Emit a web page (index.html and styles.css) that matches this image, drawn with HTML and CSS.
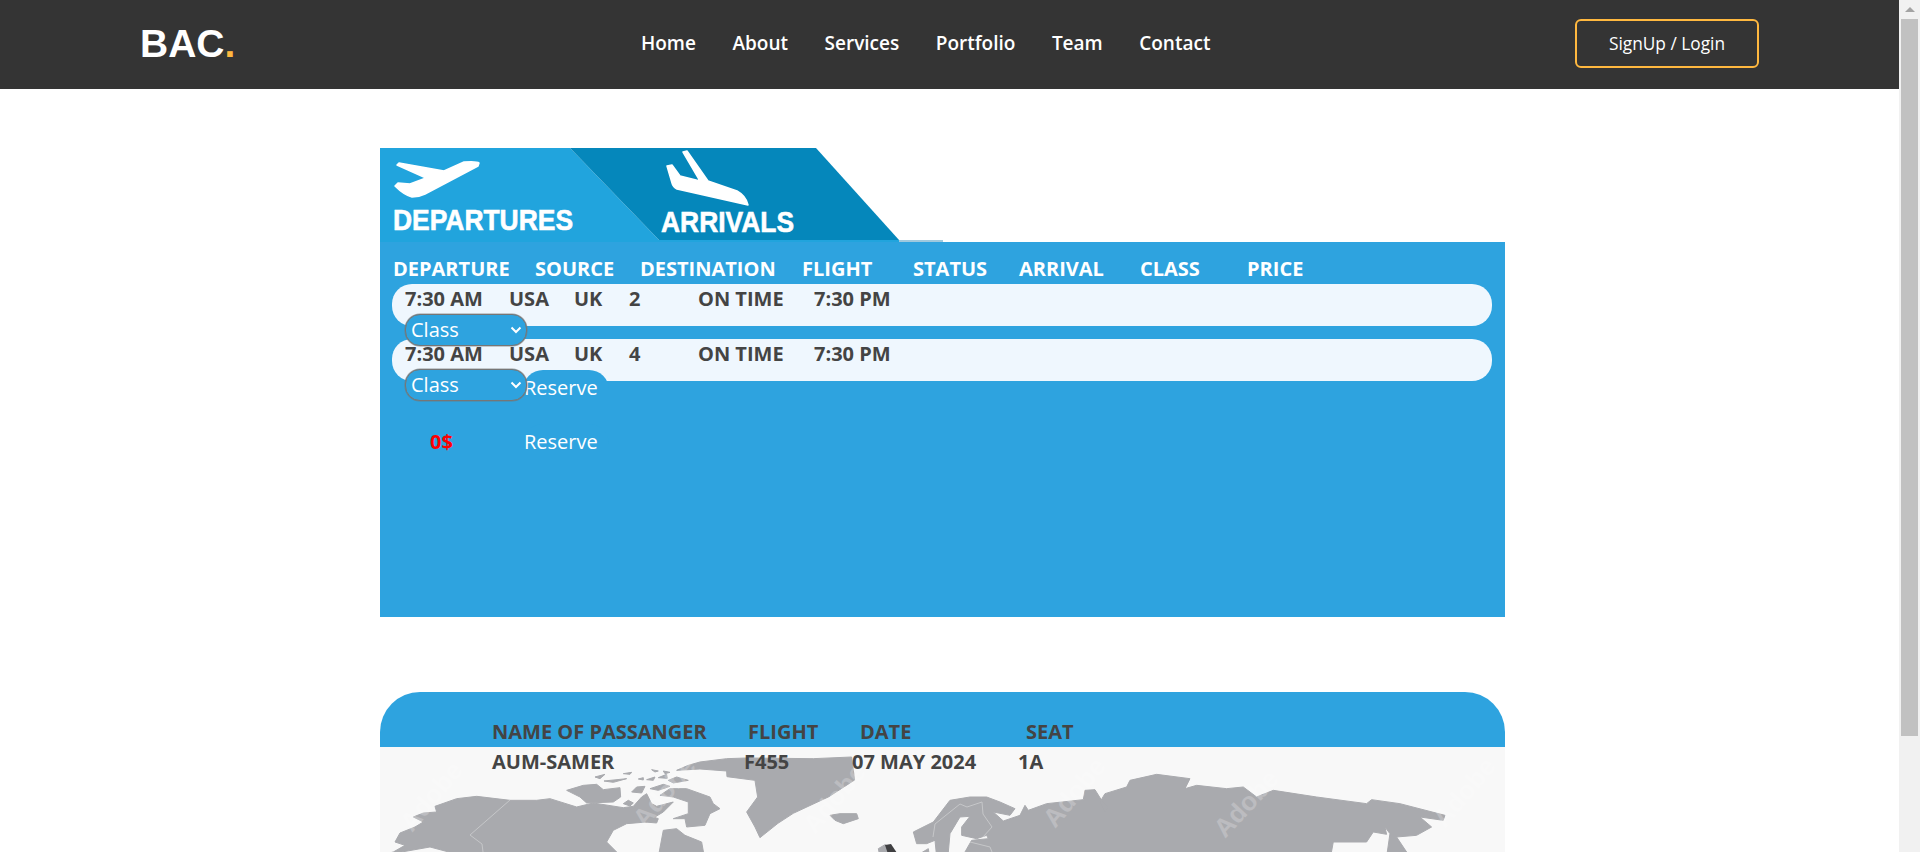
FILE: index.html
```html
<!DOCTYPE html>
<html lang="en">
<head>
<meta charset="utf-8">
<title>BAC. Flights</title>
<link rel="stylesheet" href="styles.css">
</head>
<body>
<div class="app">
<div class="content">
<header class="navbar">
  <a class="logo">BAC<span class="logo-dot">.</span></a>
  <nav class="nav-links">
    <a>Home</a><a>About</a><a>Services</a><a>Portfolio</a><a>Team</a><a>Contact</a>
  </nav>
  <a class="login-btn">SignUp / Login</a>
</header>

<main class="page">
  <svg class="banner" viewBox="0 0 563 94" width="563" height="94" aria-label="Departures and arrivals">
    <rect width="563" height="94" fill="#fff"/>
    <polygon points="0,0 190,0 279,92 519,92 563,92 563,94 0,94" fill="#21a4dd"/>
    <rect x="519" y="92" width="44" height="2" fill="#9fc9de"/>
    <polygon points="190,0 436,0 519,92 279,92" fill="#0587bb"/>
    <path class="plane" d="M100,15 Q98,13 85,14 L65,23 L20,15 L18,17 L47,30 L31,36 L19,35 L16,38 Q25,47 33,49 Q40,49 46,46 L99,18 Z" transform="translate(-1,0)"/>
    <path class="plane" d="M303,4 L307,3 L328,33 L357,43 Q366,48 368,57 L297,41 Q293,39 292,35 L287,18 L292,17 L300,28 L320,33 Z"/>
    <text class="banner-text" x="13" y="82" textLength="180" lengthAdjust="spacingAndGlyphs">DEPARTURES</text>
    <text class="banner-text" x="281" y="84" textLength="133" lengthAdjust="spacingAndGlyphs">ARRIVALS</text>
  </svg>

  <section class="board">
    <div class="board-head">
      <span>DEPARTURE</span><span>SOURCE</span><span>DESTINATION</span><span>FLIGHT</span><span>STATUS</span><span>ARRIVAL</span><span>CLASS</span><span>PRICE</span>
    </div>
    <div class="flight">
      <div class="flight-line"><span>7:30 AM</span><span>USA</span><span>UK</span><span>2</span><span>ON TIME</span><span>7:30 PM</span></div>
      <select class="class-select"><option>Class</option></select>
    </div>
    <div class="flight">
      <div class="flight-line"><span>7:30 AM</span><span>USA</span><span>UK</span><span>4</span><span>ON TIME</span><span>7:30 PM</span></div>
      <select class="class-select"><option>Class</option></select>
    </div>
    <div class="reserve-row"><button class="reserve">Reserve</button></div>
    <div class="reserve-row reserve-row-priced"><span class="price">0$</span><button class="reserve">Reserve</button></div>
  </section>

  <section class="ticket">
    <div class="ticket-head">
      <span>NAME OF PASSANGER</span><span>FLIGHT</span><span>DATE</span><span>SEAT</span>
    </div>
    <div class="ticket-body">
      <svg class="world" viewBox="0 0 1125 243" width="1125" height="243" aria-hidden="true">
        <g class="land">
          <g transform="scale(0.3333)">
            <path d="M-20,330 L40,315 L75,295 L45,285 L60,258 L105,240 L130,225 L100,210 L130,198 L170,195 L165,178 L230,155 L290,148 L390,160 L470,160 L510,155 L590,180 L640,168 L730,182 L760,178 L785,150 L800,140 L815,170 L830,178 L880,165 L850,195 L800,225 L740,230 L700,250 L680,285 L710,315 L760,400 L700,520 L640,640 L520,560 L400,440 L300,340 L150,300 Z"/>
            <path d="M560,130 L610,115 L650,112 L670,128 L720,122 L722,150 L700,165 L620,168 L600,150 Z"/>
            <path d="M840,145 L870,125 L920,125 L990,150 L1000,170 L1020,185 L990,200 L975,235 L920,240 L915,215 L880,215 L925,200 L925,165 L880,150 Z"/>
            <path d="M835,330 L850,250 L890,245 L915,265 L965,285 L975,340 L880,400 Z"/>
            <path d="M795,225 L815,208 L835,215 L830,228 Z"/>
            <path d="M730,170 L745,160 L760,168 L750,177 Z"/>
            <path d="M755,135 L770,120 L795,118 L785,138 Z"/>
            <path d="M810,125 L850,112 L870,118 L835,130 Z"/>
            <path d="M645,90 L675,82 L660,95 Z"/>
            <path d="M672,102 L740,95 L700,106 Z"/>
            <path d="M730,80 L755,76 L750,82 Z"/>
            <path d="M775,96 L790,92 L790,99 Z"/>
            <path d="M800,98 L825,90 L820,100 Z"/>
            <path d="M835,92 L860,82 L862,94 Z"/>
            <path d="M865,100 L890,90 L925,100 L880,108 Z"/>
            <path d="M815,68 L835,72 L825,75 Z"/>
            <path d="M850,72 L870,76 L855,80 Z"/>
            <path d="M890,70 L925,55 L960,45 L1040,35 L1100,33 L1300,35 L1415,30 L1424,99 L1347,149 L1240,199 L1194,229 L1140,272 L1125,240 L1100,195 L1133,150 L1125,100 L1041,89 L1040,72 L960,66 Z"/>
          </g>
          <g transform="translate(400,0) scale(0.3333)">
            <path d="M150,205 L180,200 L230,200 L235,215 L190,230 L165,220 Z"/>
            <path d="M295,305 L315,293 L330,300 L340,345 L300,330 Z"/>
            <path d="M400,255 L460,225 L510,160 L570,150 L620,150 L660,165 L705,185 L690,205 L640,195 L670,222 L720,205 L735,175 L745,190 L800,170 L910,158 L915,130 L945,128 L965,160 L985,180 L975,195 L960,165 L975,140 L1040,120 L1050,100 L1130,82 L1230,95 L1215,125 L1250,115 L1340,125 L1390,120 L1430,150 L1480,130 L1610,150 L1760,170 L1775,158 L1860,170 L1995,205 L1990,220 L1920,210 L1955,240 L1910,265 L1850,270 L1880,315 L1820,330 L1830,260 L1815,240 L1820,262 L1780,255 L1760,285 L1660,285 L1650,340 L1500,520 L1200,620 L900,560 L640,400 L600,330 L560,345 L555,315 L575,280 L625,275 L620,265 L590,275 L545,265 L545,240 L570,208 L540,210 L510,260 L505,315 L470,330 L465,280 L440,290 L410,290 Z"/>
            <path d="M420,320 L445,305 L450,340 Z"/>
          </g>
          <path class="dark-land" d="M505,845 L511,844 L517,853 L520,862 L510,860 Z" transform="translate(0,-747)"/>
        </g>
        <g class="borders">
          <path d="M130,53 L90,88 L102,97 L103,105"/>
          <path d="M553,90 L555,77 L580,57 L587,60 L602,55 L603,67 L612,80 L603,90"/>
          <path d="M590,95 L610,100 L612,105"/>
        </g>
        <g class="marks">
          <text transform="translate(32,86) rotate(-50)">Adobe</text>
          <text transform="translate(265,82) rotate(-50)">Adobe</text>
          <text transform="translate(435,88) rotate(-50)">Adobe</text>
          <text transform="translate(675,82) rotate(-50)">Adobe</text>
          <text transform="translate(845,92) rotate(-47)">Adobe</text>
          <text transform="translate(1065,82) rotate(-50)">Adobe</text>
        </g>
      </svg>
      <div class="ticket-line">
        <span>AUM-SAMER</span><span>F455</span><span>07 MAY 2024</span><span>1A</span>
      </div>
    </div>
  </section>
</main>
</div>
<aside class="scrollbar" aria-hidden="true">
  <div class="scroll-button"><span class="scroll-arrow"></span></div>
  <div class="scroll-thumb"></div>
</aside>
</div>
</body>
</html>
```

FILE: styles.css
```css
* { box-sizing: border-box; }

body {
  margin: 0;
  background: #fff;
  font-family: "Open Sans", sans-serif;
  color: #444;
}

.app {
  display: flex;
  height: 100vh;
  overflow: hidden;
}
.content {
  flex: 1 1 auto;
  min-width: 0;
  overflow-y: auto;
  scrollbar-width: none;
}

/* Window scrollbar */
.scrollbar {
  flex: 0 0 21px;
  padding: 0 2px;
  background: #f1f1f1;
}
.scroll-button {
  display: flex;
  justify-content: center;
  height: 19px;
  padding-top: 7px;
}
.scroll-arrow {
  width: 0;
  height: 0;
  border-left: 5px solid transparent;
  border-right: 5px solid transparent;
  border-bottom: 5px solid #a3a3a3;
}
.scroll-thumb {
  height: 717px;
  background: #c1c1c1;
}

/* Navbar */
.navbar {
  display: flex;
  align-items: center;
  height: 89px;
  padding: 0 140px 2px 140px;
  background: #343434;
  color: #fff;
}
.logo {
  flex: 0 0 501px;
  font-family: "Liberation Sans", Arial, sans-serif;
  font-size: 39px;
  font-weight: 700;
  line-height: 1;
}
.logo-dot { color: #ffb83f; }
.nav-links {
  display: flex;
  gap: 36.5px;
  margin-bottom: 2px;
  font-size: 19px;
  font-weight: 600;
}
.login-btn {
  display: flex;
  align-items: center;
  justify-content: center;
  width: 184px;
  height: 49px;
  margin-left: auto;
  border: 2px solid #ffb83f;
  border-radius: 6px;
  font-size: 17.3px;
}

/* Page column */
.page {
  width: 1125px;
  margin-left: 380px;
  padding-top: 59px;
}

/* Banner */
.banner { display: block; }
.plane {
  fill: #fff;
  stroke: #fff;
  stroke-width: 1.5;
  stroke-linejoin: round;
}
.banner-text {
  font-family: "Liberation Sans", Arial, sans-serif;
  font-size: 29px;
  font-weight: 700;
  fill: #fff;
  stroke: #fff;
  stroke-width: 0.6;
}

/* Flight board */
.board {
  height: 375px;
  padding-top: 15px;
  background: #2ea3df;
  font-size: 20px;
  font-weight: 700;
  line-height: 24px;
}
.board-head {
  display: grid;
  grid-template-columns: 142px 105px 162px 111px 106px 121px 107px 1fr;
  height: 24px;
  padding-left: 13px;
  color: #fff;
  white-space: nowrap;
}
.flight {
  height: 42px;
  margin: 3px 13px 13px 12px;
  padding: 3px 0 0 13px;
  background: #eff7fe;
  border-radius: 20px;
}
.flight + .flight { margin-top: 0; }
.flight-line {
  display: grid;
  grid-template-columns: 104px 65px 55px 69px 116px 1fr;
  height: 24px;
  color: #444;
  white-space: nowrap;
}
.class-select {
  position: relative;
  z-index: 2;
  display: block;
  width: 122px;
  height: 32px;
  margin: 3px 0 0 0;
  padding: 0 0 2px 5px;
  appearance: none;
  border: 1px solid #767676;
  border-radius: 15px;
  box-shadow: 0 0 0 0.5px rgba(118, 118, 118, 0.7);
  background: #2ea3df url("data:image/svg+xml,%3Csvg xmlns='http://www.w3.org/2000/svg' width='12' height='8'%3E%3Cpath d='M1.5 1.5 L6 6 L10.5 1.5' fill='none' stroke='%23fff' stroke-width='2'/%3E%3C/svg%3E") no-repeat 104px 11px;
  color: #fff;
  font-family: "Open Sans", sans-serif;
  font-size: 20px;
}

/* Reserve rows */
.reserve-row {
  display: flex;
  align-items: center;
  height: 36px;
  margin-top: -24px;
  padding-left: 143px;
}
.reserve-row-priced {
  margin-top: 18px;
  padding-left: 50px;
}
.price {
  width: 93px;
  color: #f00;
}
.reserve {
  width: 86px;
  height: 36px;
  padding: 0 0 2px 1px;
  border: 0;
  border-radius: 20px 20px 0 0;
  background: #2ea3df;
  color: #fff;
  font-family: "Open Sans", sans-serif;
  font-size: 20px;
  text-align: left;
}

/* Ticket */
.ticket {
  margin-top: 75px;
  font-size: 20px;
  font-weight: 700;
  line-height: 24px;
}
.ticket-head {
  display: grid;
  grid-template-columns: 256px 112px 166px 1fr;
  height: 55px;
  padding: 28px 0 0 112px;
  background: #2ea3df;
  border-radius: 40px 40px 0 0;
  white-space: nowrap;
}
.ticket-body {
  position: relative;
  height: 243px;
  overflow: hidden;
  background: #f8f8f8;
}
.world {
  position: absolute;
  left: 0;
  top: 0;
}
.land path { fill: #a9aaae; stroke: #a9aaae; stroke-width: 3; stroke-linejoin: round; }
.land .dark-land { fill: #3f3f41; stroke: none; }
.borders path { fill: none; stroke: #c6c7c9; stroke-width: 1; }
.marks text {
  font-family: "Liberation Sans", sans-serif;
  font-size: 26px;
  font-weight: 700;
  fill: #fff;
  opacity: 0.22;
}
.ticket-line {
  position: relative;
  display: grid;
  grid-template-columns: 252px 108px 166px 1fr;
  padding: 3px 0 0 112px;
  white-space: nowrap;
}
```
